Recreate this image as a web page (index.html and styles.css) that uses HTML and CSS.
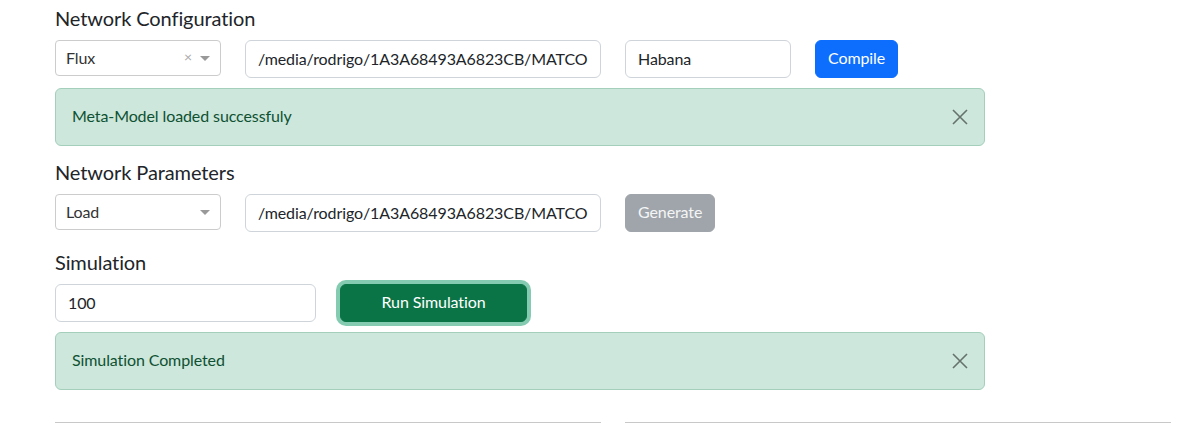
FILE: index.html
```html
<!DOCTYPE html>
<html lang="en">
<head>
<meta charset="utf-8">
<title>Network</title>
<link rel="stylesheet" href="styles.css">
</head>
<body>
<main class="page">
  <section class="block block--first">
    <h5 class="title">Network Configuration</h5>
    <div class="controls">
      <div class="select">
        <span class="select-value">Flux</span>
        <span class="select-clear">&times;</span>
        <span class="select-caret"></span>
      </div>
      <input class="field field--path" type="text" value="/media/rodrigo/1A3A68493A6823CB/MATCOM/Tesis">
      <input class="field field--short" type="text" value="Habana">
      <button class="btn btn-primary btn-compile" type="button">Compile</button>
    </div>
    <div class="alert">
      <span class="alert-text">Meta-Model loaded successfuly</span>
      <svg class="alert-close" viewBox="0 0 16 16" width="16" height="16"><path d="M1 1L15 15M15 1L1 15" stroke="currentColor" stroke-width="1.6" fill="none"/></svg>
    </div>
  </section>

  <section class="block block--second">
    <h5 class="title">Network Parameters</h5>
    <div class="controls">
      <div class="select">
        <span class="select-value">Load</span>
        <span class="select-caret"></span>
      </div>
      <input class="field field--path" type="text" value="/media/rodrigo/1A3A68493A6823CB/MATCOM/Tesis">
      <button class="btn btn-disabled btn-generate" type="button" disabled>Generate</button>
    </div>
  </section>

  <section class="block block--third">
    <h5 class="title">Simulation</h5>
    <div class="controls">
      <input class="field field--steps" type="text" value="100">
      <button class="btn btn-success btn-run" type="button">Run Simulation</button>
    </div>
    <div class="alert">
      <span class="alert-text">Simulation Completed</span>
      <svg class="alert-close" viewBox="0 0 16 16" width="16" height="16"><path d="M1 1L15 15M15 1L1 15" stroke="currentColor" stroke-width="1.6" fill="none"/></svg>
    </div>
  </section>

  <div class="bottom">
    <div class="bottom-panel"></div>
    <div class="bottom-panel"></div>
  </div>
</main>
</body>
</html>
```

FILE: styles.css
```css
* { box-sizing: border-box; }

html, body {
  margin: 0;
  padding: 0;
  background: #fff;
  overflow: hidden;
}

body {
  font-family: "Lato", "Open Sans", sans-serif;
  font-size: 16px;
  line-height: 1.5;
  letter-spacing: -0.1px;
  color: #212529;
}

.page {
  padding: 6px 0 0 55px;
  width: 1201px;
}

.title {
  margin: 0 0 10px;
  font-size: 20px;
  font-weight: 400;
  line-height: 24px;
  letter-spacing: -0.1px;
  color: #212529;
}

.block--second { margin-top: 14px; }
.block--third { margin-top: 18px; }

.controls {
  display: flex;
  align-items: flex-start;
  gap: 24px;
}

.select {
  width: 166px;
  height: 36px;
  border: 1px solid #cccccc;
  border-radius: 4px;
  display: flex;
  align-items: center;
  padding: 0 10px 1px 10px;
  color: #333;
}

.select-value { flex: 1; }

.select-clear {
  font-size: 14px;
  line-height: 1;
  color: #aaa;
  margin-right: 8px;
  margin-top: -1px;
}

.select-caret {
  width: 0;
  height: 0;
  border-left: 5px solid transparent;
  border-right: 5px solid transparent;
  border-top: 5px solid #999;
  margin-top: 2px;
}

.field {
  height: 38px;
  border: 1px solid #ced4da;
  border-radius: 6px;
  padding: 5px 12px 7px;
  font: inherit;
  letter-spacing: -0.1px;
  color: #212529;
  background: #fff;
  outline: none;
}

.field--path { width: 356px; }
.field--short { width: 166px; }
.field--steps { width: 261px; }

.btn {
  height: 38px;
  border: 1px solid transparent;
  border-radius: 6px;
  padding: 5px 12px 7px;
  font: inherit;
  letter-spacing: -0.1px;
  color: #fff;
  text-align: center;
}

.btn-primary {
  background: #0d6efd;
  border-color: #0d6efd;
}

.btn-compile { width: 83px; }

.btn-disabled {
  background: #9fa5aa;
  border-color: #9fa5aa;
  color: #f4f5f6;
}

.btn-generate { width: 90px; }

.btn-success {
  background: #0a7446;
  border-color: #0a7446;
  box-shadow: 0 0 0 4px #84cbb1;
}

.btn-run { width: 187px; }

.alert {
  margin-top: 10px;
  width: 930px;
  height: 58px;
  padding: 16px;
  border: 1px solid #a3cfbb;
  border-radius: 6px;
  background: #cde7dc;
  color: #0f5132;
  display: flex;
  align-items: center;
  justify-content: space-between;
}

.alert-text { padding-bottom: 2px; }

.alert-close {
  color: #66736d;
  flex: none;
}

.bottom {
  margin-top: 32px;
  display: flex;
  gap: 24px;
}

.bottom-panel {
  width: 546px;
  height: 20px;
  border-top: 1px solid #c8c8c8;
}
```
